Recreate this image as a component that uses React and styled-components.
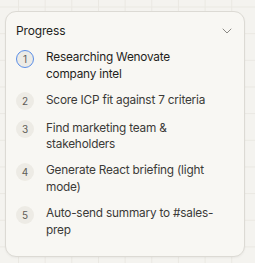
import React from 'react';
import styled, { createGlobalStyle } from 'styled-components';

const GlobalStyle = createGlobalStyle`
  html, body {
    margin: 0;
    padding: 0;
    background-color: #f4f3ef;
    background-image:
      linear-gradient(to right, #eae8e2 1px, transparent 1px),
      linear-gradient(to bottom, #eae8e2 1px, transparent 1px);
    background-size: 26.67px 26.67px;
    background-position: 18px 6.5px;
    font-family: Inter, "Liberation Sans", sans-serif;
    -webkit-font-smoothing: antialiased;
  }
  #root {
    min-height: 263px;
    padding: 11px 10px 0 5px;
    box-sizing: border-box;
  }
`;

const Card = styled.section`
  box-sizing: border-box;
  width: 240px;
  height: 246px;
  background: #f8f7f3;
  border: 1px solid #dcdad4;
  border-radius: 11px;
  padding: 10px 12px 0 10px;
  box-shadow: 0 1px 2px rgba(40, 38, 30, 0.05);
`;

const Header = styled.div`
  display: flex;
  align-items: center;
  justify-content: space-between;
  height: 17px;
  margin-bottom: 10px;
`;

const Title = styled.h3`
  margin: 0;
  font-size: 12px;
  font-weight: 400;
  color: #1f1e1c;
  letter-spacing: -0.15px;
`;

const Chevron = styled.svg`
  width: 10px;
  height: 6px;
`;

const List = styled.ol`
  list-style: none;
  margin: 0;
  padding: 0;
  display: flex;
  flex-direction: column;
  gap: 9.3px;
`;

const Item = styled.li`
  display: flex;
  align-items: flex-start;
  gap: 12px;
`;

const Step = styled.span`
  flex: none;
  box-sizing: border-box;
  width: 18px;
  height: 18px;
  border-radius: 50%;
  display: flex;
  align-items: center;
  justify-content: center;
  font-size: 10px;
  color: #5f5d58;
  background: ${(p) => (p.$active ? '#ecebe6' : '#edebe5')};
  border: ${(p) => (p.$active ? '1.4px solid #5a8ee8' : 'none')};
  margin-top: 0.6px;
`;

const Label = styled.span`
  max-width: 174px;
  font-size: 11.8px;
  line-height: 16.7px;
  color: ${(p) => (p.$active ? '#1f1e1c' : '#3b3a37')};
  letter-spacing: -0.2px;
`;

const steps = [
  'Researching Wenovate company intel',
  'Score ICP fit against 7 criteria',
  'Find marketing team & stakeholders',
  'Generate React briefing (light mode)',
  'Auto-send summary to #sales-prep',
];

export default function App() {
  return (
    <>
      <GlobalStyle />
      <Card>
        <Header>
          <Title>Progress</Title>
          <Chevron viewBox="0 0 10 6" fill="none">
            <path d="M1 1l4 4 4-4" stroke="#8a8883" strokeWidth="1" strokeLinecap="round" strokeLinejoin="round" />
          </Chevron>
        </Header>
        <List>
          {steps.map((s, i) => (
            <Item key={s}>
              <Step $active={i === 0}>{i + 1}</Step>
              <Label $active={i === 0}>{s}</Label>
            </Item>
          ))}
        </List>
      </Card>
    </>
  );
}
